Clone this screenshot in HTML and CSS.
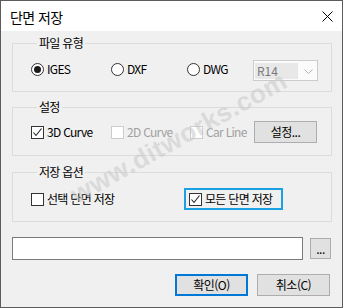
FILE: index.html
```html
<!DOCTYPE html>
<html lang="ko">
<head>
<meta charset="utf-8">
<title>단면 저장</title>
<link rel="stylesheet" href="styles.css">
</head>
<body>
<div class="window">
  <div class="titlebar">
    <span class="title">단면 저장</span>
    <svg class="close" width="11" height="11" viewBox="0 0 11 11"><path d="M0.5 0.5 L10.5 10.5 M10.5 0.5 L0.5 10.5" stroke="#000" stroke-width="1" fill="none"/></svg>
  </div>
  <div class="content">
    <fieldset class="group g1">
      <legend>파일 유형</legend>
      <div class="row">
        <label class="opt w-iges"><span class="radio on"></span>IGES</label>
        <label class="opt w-dxf"><span class="radio"></span>DXF</label>
        <label class="opt w-dwg"><span class="radio"></span>DWG</label>
        <div class="combo">
          <span class="combo-val">R14</span>
          <svg class="chev" width="9" height="5" viewBox="0 0 9 5"><path d="M0.5 0.5 L4.5 4.5 L8.5 0.5" stroke="#b4b4b4" fill="none"/></svg>
        </div>
      </div>
    </fieldset>

    <fieldset class="group g2">
      <legend>설정</legend>
      <div class="row">
        <label class="opt w-3d"><span class="check on"><svg width="11" height="11" viewBox="0 0 11 11"><path d="M1.5 5.5 L4 8.5 L9.5 1.5" stroke="#222" stroke-width="1.1" fill="none"/></svg></span>3D Curve</label>
        <label class="opt w-2d disabled"><span class="check"></span>2D Curve</label>
        <label class="opt w-car disabled"><span class="check"></span>Car Line</label>
        <button class="btn btn-set">설정...</button>
      </div>
    </fieldset>

    <fieldset class="group g3">
      <legend>저장 옵션</legend>
      <div class="row">
        <label class="opt w-sel"><span class="check"></span>선택 단면 저장</label>
        <label class="opt focus"><span class="check on"><svg width="11" height="11" viewBox="0 0 11 11"><path d="M1.5 5.5 L4 8.5 L9.5 1.5" stroke="#222" stroke-width="1.1" fill="none"/></svg></span>모든 단면 저장</label>
      </div>
    </fieldset>

    <div class="pathrow">
      <div class="path"></div>
      <button class="btn btn-dots">...</button>
    </div>

    <div class="actions">
      <button class="btn btn-act default">확인(O)</button>
      <button class="btn btn-act">취소(C)</button>
    </div>
  </div>
  <div class="watermark">www.ditworks.com</div>
</div>
</body>
</html>
```

FILE: styles.css
```css
* { box-sizing: border-box; }
html, body { margin: 0; padding: 0; background: #f0f0f0; }
body {
  font-family: "Noto Sans CJK KR", "Noto Sans", sans-serif;
  font-size: 12px;
  color: #000;
}
.window {
  position: relative;
  width: 343px;
  height: 308px;
  border: 1px solid #5c5c5c;
  background: #f0f0f0;
  overflow: hidden;
}
.titlebar {
  height: 30px;
  background: #fff;
  display: flex;
  align-items: center;
  justify-content: space-between;
  padding: 0 9px 0 9px;
}
.title {
  font-size: 14px;
  letter-spacing: -0.6px;
  line-height: 16px;
  margin-top: 1px;
}
.close { display: block; margin-top: 0; }

.content {
  display: flex;
  flex-direction: column;
  padding: 4px 10px 0 11px;
}
.group {
  margin: 0;
  padding: 0 0 0 18px;
  border: 1px solid #dcdcdc;
  min-width: 0;
}
.group legend {
  margin-left: 6px;
  padding: 0 2px;
  line-height: 16px;
  letter-spacing: -0.7px;
}
.g1 { padding-top: 9px; padding-bottom: 10px; }
.g2 { margin-top: 7px; padding-top: 6px; padding-bottom: 12px; }
.g3 { margin-top: 8px; padding-top: 8px; padding-bottom: 11px; }

.row { display: flex; align-items: center; }
.opt {
  display: flex;
  align-items: center;
  gap: 3px;
  line-height: 16px;
  white-space: nowrap;
  letter-spacing: -0.7px;
}
.g1 .opt { margin-top: -3px; }
.w-iges { width: 80px; }
.w-dxf { width: 76px; }
.w-dwg { width: 66px; }
.w-3d { width: 80px; }
.w-2d { width: 79px; }
.w-car { width: 64px; }
.w-sel { width: 153px; }
.disabled { color: #a0a0a0; }

.radio {
  width: 13px; height: 13px;
  border: 1px solid #333;
  border-radius: 50%;
  background: #fff;
  display: flex; align-items: center; justify-content: center;
  flex: none;
}
.radio.on::after {
  content: "";
  width: 7px; height: 7px;
  border-radius: 50%;
  background: #1a1a1a;
}
.check {
  width: 13px; height: 13px;
  border: 1px solid #333;
  background: #fff;
  flex: none;
  display: flex;
}
.check svg { display: block; }
.disabled .check { border-color: #cccccc; }

.combo {
  width: 65px; height: 21px;
  border: 1px solid #cccccc;
  background: #fbfbfb;
  display: flex;
  align-items: center;
  justify-content: space-between;
  padding: 0 4px 0 1px;
}
.combo-val {
  width: 43px; height: 16px;
  background: #e8e8e8;
  color: #7a7a7a;
  line-height: 16px;
  padding-left: 2px;
}
.chev { display: block; margin-top: 1px; }

.btn {
  font-family: inherit;
  font-size: 12px;
  color: #000;
  background: #e1e1e1;
  border: 1px solid #adadad;
  padding: 0;
  margin: 0;
  line-height: 16px;
  letter-spacing: -0.5px;
}
.btn-set { width: 63px; height: 22px; }

.focus {
  width: 99px; height: 22px;
  border: 2px solid #1ba1e2;
  padding-left: 3px;
}

.pathrow {
  display: flex;
  align-items: center;
  margin-top: 15px;
  gap: 7px;
}
.path {
  width: 291px; height: 23px;
  border: 1px solid #7a7a7a;
  background: #fff;
}
.btn-dots { width: 21px; height: 21px; line-height: 14px; }

.actions {
  display: flex;
  justify-content: flex-end;
  gap: 9px;
  margin-top: 14px;
  padding-right: 2px;
}
.btn-act { width: 73px; height: 22px; }
.btn-act.default { border: 2px solid #0078d7; }

.watermark {
  position: absolute;
  left: 72px;
  top: 180px;
  font-family: "Liberation Sans", sans-serif;
  font-weight: bold;
  font-size: 26px;
  color: rgba(200, 200, 200, 0.55);
  transform: rotate(-29deg);
  transform-origin: 0 50%;
  pointer-events: none;
  white-space: nowrap;
  letter-spacing: 0.5px;
}
```
